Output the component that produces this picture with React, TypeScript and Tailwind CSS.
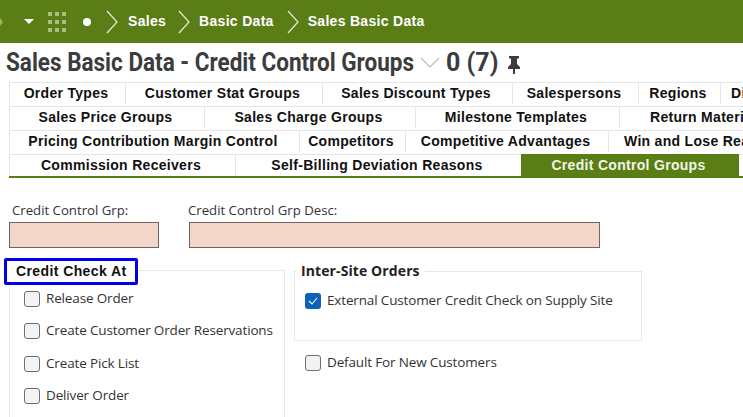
const green = "bg-[#5a7d16]";

function Chevron() {
  return (
    <svg width="14" height="26" viewBox="0 0 14 26" className="shrink-0" fill="none" stroke="#e4ecd2" strokeWidth="1.2">
      <path d="M2 2 L12 13 L2 24" />
    </svg>
  );
}

function TopBar() {
  return (
    <div className={`flex h-[43px] items-center ${green} font-['Liberation_Sans',sans-serif] text-[14px] font-bold tracking-[0.3px] text-white`}>
      <div className="h-0 w-0 border-y-[4px] border-l-[3px] border-y-transparent border-l-[#9db56b]" />
      <div className="ml-[21px] h-0 w-0 border-x-[5px] border-t-[5px] border-x-transparent border-t-white" />
      <div className="ml-[14px] grid grid-cols-3 gap-x-[3px] gap-y-[4px]">
        {Array.from({ length: 9 }).map((_, i) => (
          <div key={i} className="h-[4px] w-[4px] bg-[#a9bf7f]" />
        ))}
      </div>
      <div className="ml-[17px] h-[8px] w-[8px] rounded-full bg-white" />
      <div className="ml-[14px]"><Chevron /></div>
      <span className="ml-[9px]">Sales</span>
      <div className="ml-[11px]"><Chevron /></div>
      <span className="ml-[8px]">Basic Data</span>
      <div className="ml-[12px]"><Chevron /></div>
      <span className="ml-[8px]">Sales Basic Data</span>
    </div>
  );
}

function TitleRow() {
  return (
    <div className="flex h-[39px] items-center pl-[6px] font-['Roboto',sans-serif] text-[#3c3c3c]">
      <div className="w-[408px] shrink-0">
        <div className="origin-left scale-x-[0.9] whitespace-nowrap text-[25px] font-bold leading-none">
          Sales Basic Data - Credit Control Groups
        </div>
      </div>
      <svg width="20" height="12" viewBox="0 0 20 12" className="ml-[6px] shrink-0" fill="none" stroke="#b9b9b9" strokeWidth="1.2">
        <path d="M1 1 L10 10 L19 1" />
      </svg>
      <span className="ml-[6px] w-[54px] shrink-0 whitespace-nowrap text-[25px] font-bold leading-none">0 (7)</span>
      <svg width="16" height="19" viewBox="0 0 16 19" className="ml-[6px] mt-[3px] shrink-0" fill="#3c3c3c">
        <path d="M3 1h10v2l-2 1v5l3 3v2H9v5H7v-5H2v-2l3-3V4L3 3z" />
      </svg>
    </div>
  );
}

type Tab = { label: string; w: number; active?: boolean; pad?: number };

const rows: Tab[][] = [
  [
    { label: "Order Types", w: 116 },
    { label: "Customer Stat Groups", w: 197 },
    { label: "Sales Discount Types", w: 190 },
    { label: "Salespersons", w: 126 },
    { label: "Regions", w: 82 },
    { label: "Di", w: 60, pad: 10 },
  ],
  [
    { label: "Sales Price Groups", w: 195 },
    { label: "Sales Charge Groups", w: 211 },
    { label: "Milestone Templates", w: 204 },
    { label: "Return Material Reasons", w: 210, pad: 30 },
  ],
  [
    { label: "Pricing Contribution Margin Control", w: 290 },
    { label: "Competitors", w: 106 },
    { label: "Competitive Advantages", w: 203 },
    { label: "Win and Lose Reasons", w: 210, pad: 15 },
  ],
  [
    { label: "Commission Receivers", w: 226 },
    { label: "Self-Billing Deviation Reasons", w: 286 },
    { label: "Credit Control Groups", w: 218, active: true },
  ],
];

function Tabs() {
  return (
    <div className="ml-[9px] flex flex-col gap-[2px] overflow-hidden font-['Liberation_Sans',sans-serif] text-[14px] font-bold tracking-[0.3px] text-[#111]">
      {rows.map((row, i) => (
        <div key={i} className="flex h-[22px] border-t border-[#e4e4e4]">
          {row.map((t) => (
            <div
              key={t.label}
              style={t.pad ? { width: t.w, paddingLeft: t.pad } : { width: t.w }}
              className={
                t.active
                  ? `-mt-px flex h-[23px] shrink-0 items-center justify-center whitespace-nowrap pr-[3px] ${green} text-[#f1f5e6]`
                  : t.pad
                    ? "flex shrink-0 items-center justify-start whitespace-nowrap border-l border-[#e4e4e4]"
                    : "flex shrink-0 items-center justify-center whitespace-nowrap border-l border-[#e4e4e4] pr-[3px]"
              }
            >
              {t.label}
            </div>
          ))}
        </div>
      ))}
      <div className={`-mt-[2px] h-[2px] ${green}`} />
    </div>
  );
}

function Check({ label, checked, className = "" }: { label: string; checked?: boolean; className?: string }) {
  return (
    <div className={`flex h-[16px] items-center gap-[6px] whitespace-nowrap text-[13.5px] tracking-[-0.15px] text-[#333] ${className}`}>
      {checked ? (
        <div className="flex h-[16px] w-[16px] shrink-0 items-center justify-center rounded-[3px] bg-[#0b62b8]">
          <svg width="10" height="8" viewBox="0 0 10 8" fill="none" stroke="white" strokeWidth="1.1">
            <path d="M1 4 L4 7 L9 1" />
          </svg>
        </div>
      ) : (
        <div className="h-[16px] w-[16px] shrink-0 rounded-[3px] border border-[#6f6f6f] bg-[#f3f3f3]" />
      )}
      <span className="pb-[2px]">{label}</span>
    </div>
  );
}

function Form() {
  return (
    <div className="font-['Open_Sans',sans-serif] text-[#333]">
      <div className="ml-[9px] mt-[23px] flex gap-[30px]">
        <div className="w-[150px] shrink-0">
          <div className="pl-[3px] text-[13.2px] leading-[18px]">Credit Control Grp:</div>
          <div className="mt-[3px] h-[26px] border border-[#6e6660] bg-[#f4d6c8]" />
        </div>
        <div className="w-[411px] shrink-0">
          <div className="-ml-px text-[13.2px] leading-[18px]">Credit Control Grp Desc:</div>
          <div className="mt-[3px] h-[26px] border border-[#6e6660] bg-[#f4d6c8]" />
        </div>
      </div>
      <div className="ml-[9px] mt-[22px] flex items-start gap-[9px]">
        <div className="relative h-[160px] w-[276px] shrink-0 border border-[#e8e8e8] pl-[14px] pt-[20px]">
          <div className="absolute -left-[6px] -top-[13px] flex h-[27px] w-[134px] items-center rounded-[2px] border-[3px] border-[#0000e6] bg-white pl-[9px] font-['Liberation_Sans',sans-serif] text-[14px] font-bold tracking-[0.4px] text-[#111]">
            Credit Check At
          </div>
          <div className="flex flex-col gap-[16px]">
            <Check label="Release Order" />
            <Check label="Create Customer Order Reservations" />
            <Check label="Create Pick List" className="mt-px" />
            <Check label="Deliver Order" />
          </div>
        </div>
        <div className="mt-px shrink-0">
          <div className="relative h-[70px] w-[348px] border border-[#e8e8e8] pl-[10px] pt-[21px]">
            <div className="absolute left-[1px] -top-[10px] bg-white px-[5px] text-[14px] font-bold leading-[18px] tracking-[0.1px] text-[#222]">
              Inter-Site Orders
            </div>
            <Check label="External Customer Credit Check on Supply Site" checked />
          </div>
          <div className="ml-[11px] mt-[14px]">
            <Check label="Default For New Customers" />
          </div>
        </div>
      </div>
    </div>
  );
}

export default function App() {
  return (
    <div className="h-[417px] w-[743px] overflow-hidden bg-white">
      <TopBar />
      <TitleRow />
      <Tabs />
      <Form />
    </div>
  );
}
